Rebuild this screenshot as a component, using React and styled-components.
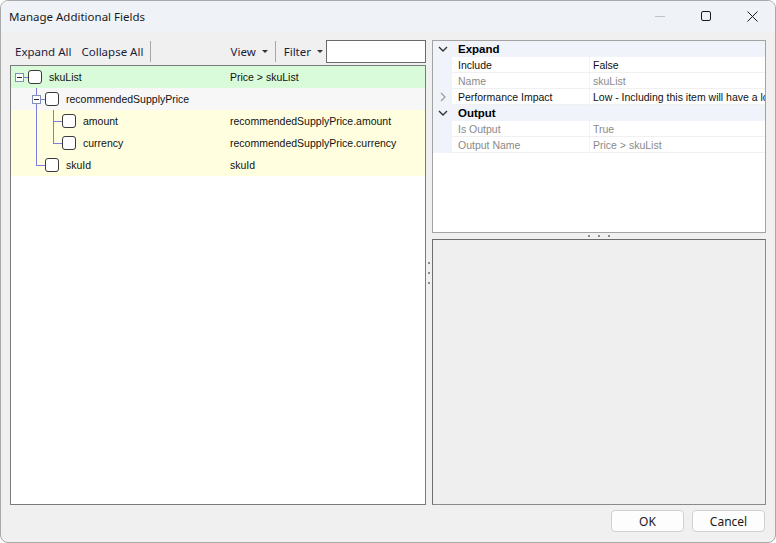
import React from 'react';
import styled, { createGlobalStyle } from 'styled-components';

const GlobalStyle = createGlobalStyle`
  html, body {
    margin: 0;
    padding: 0;
    background: #ffffff;
  }
  * {
    box-sizing: border-box;
  }
`;

// segments: one entry per indent level, 'pass' draws the parent's line through
const treeRows = [
  { label: 'skuList', path: 'Price > skuList', depth: 0, tone: 'green', expander: true, segments: [], joint: 'none' },
  { label: 'recommendedSupplyPrice', path: '', depth: 1, tone: 'grey', expander: true, segments: [''], joint: 'tee' },
  { label: 'amount', path: 'recommendedSupplyPrice.amount', depth: 2, tone: 'yellow', segments: ['', 'pass'], joint: 'tee' },
  { label: 'currency', path: 'recommendedSupplyPrice.currency', depth: 2, tone: 'yellow', segments: ['', 'pass'], joint: 'elbow' },
  { label: 'skuId', path: 'skuId', depth: 1, tone: 'yellow', segments: [''], joint: 'elbow' }
];

const props = [
  { type: 'category', label: 'Expand' },
  { label: 'Include', value: 'False' },
  { label: 'Name', value: 'skuList', muted: true },
  { label: 'Performance Impact', value: 'Low - Including this item will have a low impact on performance', more: true },
  { type: 'category', label: 'Output' },
  { label: 'Is Output', value: 'True', muted: true },
  { label: 'Output Name', value: 'Price > skuList', muted: true }
];

const toneColors = {
  green: '#d9fbd9',
  grey: '#f7f7f7',
  yellow: '#ffffe0'
};

function ChevronDown() {
  return (
    <svg width="10" height="6" viewBox="0 0 10 6">
      <polyline points="1,1 5,5 9,1" fill="none" stroke="#333" strokeWidth="1.4" />
    </svg>
  );
}

function ChevronRight() {
  return (
    <svg width="6" height="10" viewBox="0 0 6 10">
      <polyline points="1,1 5,5 1,9" fill="none" stroke="#9a9a9a" strokeWidth="1.2" />
    </svg>
  );
}

function TreeRow({ row }) {
  return (
    <Row $tone={row.tone}>
      <NameCell>
        {row.segments.map((s, i) => (
          <Segment key={i} $pass={s === 'pass'} />
        ))}
        <Slot $joint={row.joint}>
          {row.expander && (
            <Expander>
              <span />
            </Expander>
          )}
        </Slot>
        <CheckBox />
        <span>{row.label}</span>
      </NameCell>
      <PathCell>{row.path}</PathCell>
    </Row>
  );
}

function App() {
  return (
    <>
      <GlobalStyle />
      <Window>
        <TitleBar>
          <Title>Manage Additional Fields</Title>
          <Controls>
            <ControlButton>
              <svg width="10" height="10" viewBox="0 0 10 10">
                <line x1="0" y1="5.5" x2="10" y2="5.5" stroke="#c4c4c4" strokeWidth="1" />
              </svg>
            </ControlButton>
            <ControlButton>
              <svg width="10" height="10" viewBox="0 0 10 10">
                <rect x="0.5" y="0.5" width="9" height="9" rx="1.5" fill="none" stroke="#1a1a1a" strokeWidth="1" />
              </svg>
            </ControlButton>
            <ControlButton>
              <svg width="11" height="11" viewBox="0 0 11 11">
                <path d="M0.5 0.5 L10.5 10.5 M10.5 0.5 L0.5 10.5" stroke="#1a1a1a" strokeWidth="1" />
              </svg>
            </ControlButton>
          </Controls>
        </TitleBar>

        <Main>
          <LeftColumn>
            <Toolbar>
              <ToolButton>Expand All</ToolButton>
              <ToolButton>Collapse All</ToolButton>
              <ToolSeparator />
              <Spacer />
              <ToolButton>
                View <Caret />
              </ToolButton>
              <ToolSeparator />
              <ToolButton $last>
                Filter <Caret />
              </ToolButton>
              <FilterInput />
            </Toolbar>
            <TreePanel>
              {treeRows.map(row => (
                <TreeRow key={row.label} row={row} />
              ))}
            </TreePanel>
          </LeftColumn>

          <VSplitter>
            <Dot />
            <Dot />
            <Dot />
          </VSplitter>

          <RightColumn>
            <PropGrid>
              {props.map(p =>
                p.type === 'category' ? (
                  <PropRow key={p.label}>
                    <Gutter>
                      <ChevronDown />
                    </Gutter>
                    <CategoryLabel>{p.label}</CategoryLabel>
                  </PropRow>
                ) : (
                  <PropRow key={p.label}>
                    <Gutter>{p.more && <ChevronRight />}</Gutter>
                    <PropLabel $muted={p.muted}>{p.label}</PropLabel>
                    <PropValue $muted={p.muted}>{p.value}</PropValue>
                  </PropRow>
                )
              )}
            </PropGrid>
            <HSplitter>
              <Dot />
              <Dot />
              <Dot />
            </HSplitter>
            <DescPanel />
          </RightColumn>
        </Main>

        <Footer>
          <DialogButton>OK</DialogButton>
          <DialogButton>Cancel</DialogButton>
        </Footer>
      </Window>
    </>
  );
}

const lineColor = '#7c7ce0';

const Window = styled.div`
  width: 776px;
  height: 543px;
  display: flex;
  flex-direction: column;
  background: #f0f0f0;
  border: 1px solid #a9a9a9;
  border-radius: 8px;
  overflow: hidden;
  font-family: 'Noto Sans', 'Open Sans', sans-serif;
`;

const TitleBar = styled.div`
  height: 30px;
  flex: none;
  display: flex;
  align-items: center;
  justify-content: space-between;
  background: #eff3f8;
`;

const Title = styled.div`
  padding-left: 8px;
  font-size: 11.5px;
  color: #1a1a1a;
`;

const Controls = styled.div`
  display: flex;
  align-self: stretch;
`;

const ControlButton = styled.div`
  width: 46px;
  display: flex;
  align-items: center;
  justify-content: center;
`;

const Main = styled.div`
  flex: 1;
  display: grid;
  grid-template-columns: 416px 6px 334px;
  padding: 9px 9px 0 9px;
  min-height: 0;
`;

const LeftColumn = styled.div`
  display: flex;
  flex-direction: column;
  min-height: 0;
`;

const Toolbar = styled.div`
  height: 25px;
  flex: none;
  display: flex;
  align-items: flex-start;
  padding-left: 1px;
`;

const ToolButton = styled.div`
  height: 22px;
  display: flex;
  align-items: center;
  gap: 6px;
  padding: 0 ${p => (p.$last ? '3px' : '4px')} 0 4px;
  margin-right: ${p => (p.$last ? '0' : '2px')};
  font-size: 11.5px;
  color: #1c1c3c;
  white-space: nowrap;
`;

const Caret = styled.span`
  width: 0;
  height: 0;
  border-left: 3px solid transparent;
  border-right: 3px solid transparent;
  border-top: 3px solid #333;
  margin-top: 1px;
`;

const ToolSeparator = styled.div`
  width: 1px;
  height: 21px;
  margin: 1px 4px 0 1px;
  background: #a7a7a7;
`;

const Spacer = styled.div`
  flex: 1;
`;

const FilterInput = styled.div`
  width: 100px;
  height: 23px;
  background: #ffffff;
  border: 1px solid #6a6a6a;
`;

const TreePanel = styled.div`
  flex: 1;
  background: #ffffff;
  border: 1px solid #7a7a7a;
  font-family: 'Liberation Sans', Arial, sans-serif;
  font-size: 10.5px;
  color: #111;
`;

const Row = styled.div`
  height: 22px;
  display: flex;
  align-items: center;
  background: ${p => toneColors[p.$tone]};
`;

const NameCell = styled.div`
  width: 219px;
  height: 100%;
  display: flex;
  align-items: center;
  padding-left: 4px;
`;

const Segment = styled.div`
  width: 17px;
  flex: none;
  align-self: stretch;
  background: ${p =>
    p.$pass ? `linear-gradient(${lineColor}, ${lineColor}) 4px 0 / 1px 100% no-repeat` : 'none'};
`;

const Slot = styled.div`
  width: 13px;
  flex: none;
  align-self: stretch;
  position: relative;
  background: ${p => {
    const h = `linear-gradient(${lineColor}, ${lineColor}) 4px 11px / 9px 1px no-repeat`;
    if (p.$joint === 'tee') return `${h}, linear-gradient(${lineColor}, ${lineColor}) 4px 0 / 1px 100% no-repeat`;
    if (p.$joint === 'elbow') return `${h}, linear-gradient(${lineColor}, ${lineColor}) 4px 0 / 1px 12px no-repeat`;
    return h;
  }};
`;

const Expander = styled.div`
  position: absolute;
  left: 0;
  top: 7px;
  width: 9px;
  height: 9px;
  border: 1px solid #8190b4;
  background: #fff;
  display: flex;
  align-items: center;
  justify-content: center;
  span {
    width: 5px;
    height: 1px;
    background: #2a2a2a;
  }
`;

const CheckBox = styled.div`
  width: 14px;
  height: 14px;
  flex: none;
  margin-right: 7px;
  border: 1px solid #3a3a3a;
  border-radius: 3px;
  background: #fff;
`;

const PathCell = styled.div`
  flex: 1;
  white-space: nowrap;
  overflow: hidden;
`;

const VSplitter = styled.div`
  display: flex;
  flex-direction: column;
  align-items: center;
  justify-content: center;
  gap: 8px;
  padding-right: 1px;
`;

const HSplitter = styled.div`
  height: 6px;
  flex: none;
  display: flex;
  align-items: center;
  justify-content: center;
  gap: 8px;
`;

const Dot = styled.div`
  width: 2px;
  height: 2px;
  background: #8c8c8c;
`;

const RightColumn = styled.div`
  display: flex;
  flex-direction: column;
  min-height: 0;
`;

const PropGrid = styled.div`
  height: 193px;
  flex: none;
  background: #ffffff;
  border: 1px solid #a3a3a3;
  overflow: hidden;
  font-family: 'Liberation Sans', Arial, sans-serif;
  font-size: 10.5px;
  color: #111;
`;

const PropRow = styled.div`
  height: 16px;
  display: grid;
  grid-template-columns: 19px 138px 1fr;
  align-items: stretch;
  background: #f0f4fa;
`;

const Gutter = styled.div`
  display: flex;
  align-items: center;
  justify-content: center;
  padding-left: 1px;
`;

const CategoryLabel = styled.div`
  grid-column: 2 / 4;
  display: flex;
  align-items: center;
  padding-left: 6px;
  font-weight: bold;
  font-size: 11.5px;
  color: #000;
`;

const PropLabel = styled.div`
  display: flex;
  align-items: center;
  padding-left: 6px;
  background: #fff;
  border-bottom: 1px solid #f0f0f0;
  border-right: 1px solid #f4f4f4;
  color: ${p => (p.$muted ? '#8a8a8a' : '#111')};
  white-space: nowrap;
`;

const PropValue = styled.div`
  display: flex;
  align-items: center;
  padding-left: 3px;
  background: #fff;
  border-bottom: 1px solid #f0f0f0;
  color: ${p => (p.$muted ? '#8a8a8a' : '#111')};
  white-space: nowrap;
  overflow: hidden;
`;

const DescPanel = styled.div`
  flex: 1;
  background: #efefef;
  border: 1px solid #8a8a8a;
  border-top-color: #6c6c6c;
  border-left-color: #6c6c6c;
`;

const Footer = styled.div`
  height: 37px;
  flex: none;
  display: flex;
  justify-content: flex-end;
  align-items: flex-start;
  gap: 8px;
  padding: 5px 10px 0 0;
`;

const DialogButton = styled.div`
  width: 73px;
  height: 22px;
  display: flex;
  align-items: center;
  justify-content: center;
  background: #fdfdfd;
  border: 1px solid #d0d0d0;
  border-radius: 4px;
  font-size: 12px;
  color: #1a1a1a;
`;

export default App;
